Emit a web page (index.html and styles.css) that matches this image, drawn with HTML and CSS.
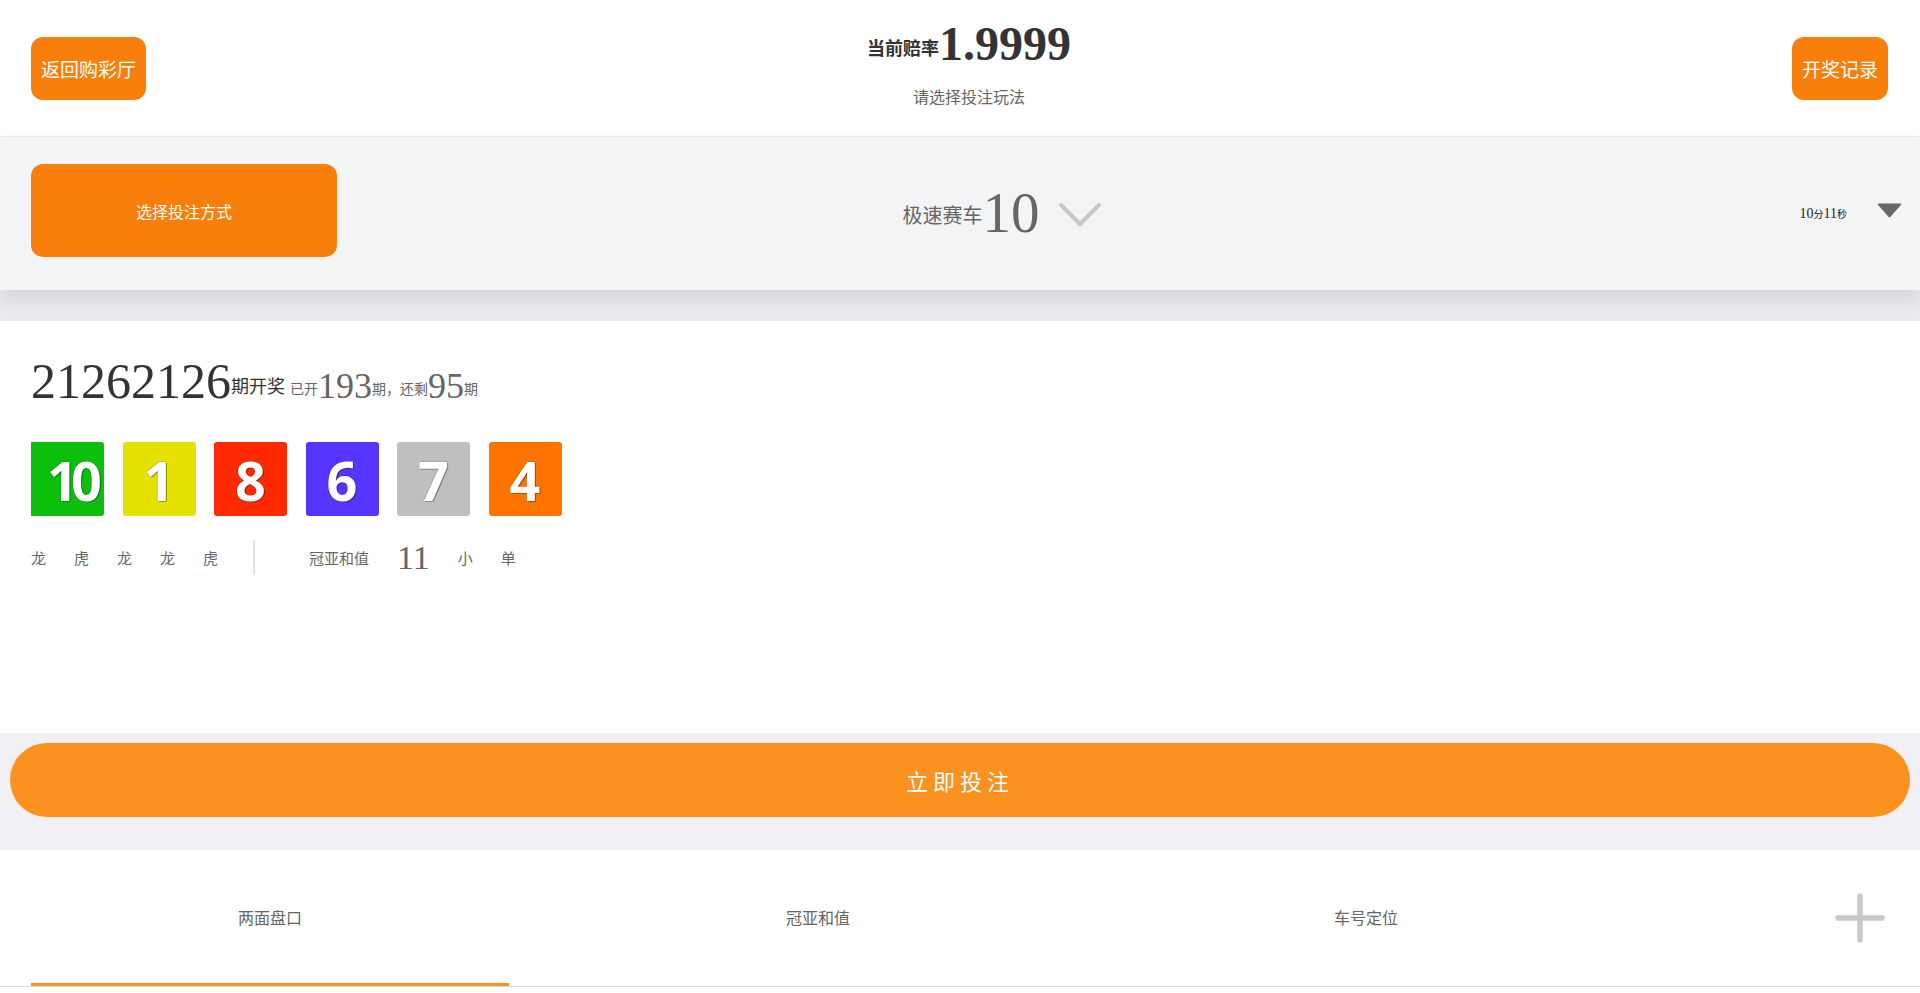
FILE: index.html
```html
<!DOCTYPE html>
<html lang="zh-CN">
<head>
<meta charset="utf-8">
<title>极速赛车10</title>
<link rel="stylesheet" href="styles.css">
</head>
<body>
<div class="page">
  <header class="topbar">
    <button class="btn-sm">返回购彩厅</button>
    <div class="title-wrap">
      <div class="title"><span class="cn">当前赔率</span>1.9999</div>
      <div class="subtitle">请选择投注玩法</div>
    </div>
    <button class="btn-sm">开奖记录</button>
  </header>

  <section class="selector">
    <button class="btn-mode">选择投注方式</button>
    <div class="game">
      <span class="game-name"><span class="cn">极速赛车</span>10</span>
      <svg class="chev" width="44" height="26" viewBox="0 0 44 26"><path d="M3 3 L22 22 L41 3" fill="none" stroke="#c8c8c8" stroke-width="4" stroke-linecap="round" stroke-linejoin="round"/></svg>
    </div>
    <div class="timer">
      <span class="timer-text">10<span class="cn">分</span>11<span class="cn">秒</span></span>
      <svg class="tri" width="25" height="15" viewBox="0 0 25 15"><path d="M1.5 1.2 H23.5 L12.5 13.8 Z" fill="#666" stroke="#666" stroke-width="1.5" stroke-linejoin="round"/></svg>
    </div>
  </section>

  <section class="result">
    <div class="issue">21262126<span class="cn">期开奖</span><span class="meta"><span class="cn">已开</span>193<span class="cn">期，还剩</span>95<span class="cn">期</span></span></div>
    <div class="balls">
      <div class="ball c-green"><span class="tight">10</span></div>
      <div class="ball c-yellow"><span>1</span></div>
      <div class="ball c-red"><span>8</span></div>
      <div class="ball c-blue"><span>6</span></div>
      <div class="ball c-gray"><span>7</span></div>
      <div class="ball c-orange"><span>4</span></div>
    </div>
    <div class="stats">
      <span class="cn">龙</span>
      <span class="cn">虎</span>
      <span class="cn">龙</span>
      <span class="cn">龙</span>
      <span class="cn">虎</span>
      <i class="divider"></i>
      <span class="cn">冠亚和值</span>
      <span class="num">11</span>
      <span class="cn">小</span>
      <span class="cn">单</span>
    </div>
  </section>

  <div class="action">
    <button class="bet">立即投注</button>
  </div>

  <nav class="tabs">
    <div class="tab active">两面盘口</div>
    <div class="tab">冠亚和值</div>
    <div class="tab">车号定位</div>
    <svg class="plus" width="50" height="50" viewBox="0 0 50 50"><path d="M25 3 V47 M3 25 H47" stroke="#c8c8c8" stroke-width="5.5" stroke-linecap="round"/></svg>
  </nav>
</div>
</body>
</html>
```

FILE: styles.css
```css
* { box-sizing: border-box; }
html, body { margin: 0; padding: 0; background: #fff; }
body { font-family: "Liberation Serif", "Noto Sans CJK SC", serif; color: #333; }
button { border: 0; margin: 0; padding: 0; cursor: pointer; font: inherit; }

.cn { font-family: "Noto Sans CJK SC", sans-serif; font-weight: 400; line-height: 1; }

.page { width: 1920px; background: #ececf0; }

/* header */
.topbar {
  height: 137px;
  display: flex;
  align-items: center;
  justify-content: space-between;
  padding: 0 32px 0 31px;
  background: #fff;
  border-bottom: 1px solid #ebebeb;
}
.btn-sm {
  height: 63px;
  padding: 0 10px;
  border-radius: 12px;
  background: #f97f0c;
  color: #fff;
  font-family: "Noto Sans CJK SC", sans-serif;
  font-size: 19px;
}
.title-wrap {
  align-self: flex-start;
  padding-top: 18px;
  display: flex;
  flex-direction: column;
  align-items: center;
}
.title {
  height: 52px;
  font-size: 48px;
  font-weight: 700;
  line-height: 52px;
  color: #333;
}
.title .cn { font-size: 18px; font-weight: 700; vertical-align: 0.3em; }
.subtitle {
  font-family: "Noto Sans CJK SC", sans-serif;
  font-size: 16px;
  line-height: 52px;
  color: #666;
}

/* selector bar */
.selector {
  position: relative;
  z-index: 1;
  height: 153px;
  display: flex;
  align-items: center;
  padding: 0 18px 6px 31px;
  background: #f3f4f6;
  box-shadow: 0 8px 20px rgba(0, 0, 0, 0.11);
}
.btn-mode {
  width: 306px;
  height: 93px;
  border-radius: 12px;
  background: #f97f0c;
  color: #fff;
  font-family: "Noto Sans CJK SC", sans-serif;
  font-size: 16px;
}
.game {
  flex: 1;
  display: flex;
  align-items: center;
  justify-content: center;
}
.game-name {
  height: 60px;
  font-size: 57px;
  line-height: 60px;
  color: #666;
  margin-top: 4px;
}
.game-name .cn { font-size: 20px; vertical-align: 0.45em; }
.chev { margin-left: 18px; margin-top: 8px; }
.timer {
  width: 235px;
  display: flex;
  align-items: center;
  justify-content: flex-end;
}
.timer-text { font-size: 14px; color: #222; margin-top: 6px; }
.timer-text .cn { font-size: 10px; }
.tri { margin-left: 30px; }

/* result area */
.result {
  margin-top: 31px;
  height: 412px;
  background: #fff;
  padding: 30px 31px 0;
}
.issue {
  height: 60px;
  font-size: 50px;
  line-height: 60px;
  color: #333;
  white-space: nowrap;
}
.issue > .cn { font-size: 18px; vertical-align: 0.3em; }
.meta { font-size: 36px; color: #666; margin-left: 5px; }
.meta .cn { font-size: 14px; vertical-align: 0.3em; }

.balls {
  margin-top: 31px;
  display: flex;
  gap: 18.5px;
}
.ball {
  width: 73px;
  height: 74px;
  border-radius: 3px;
  display: flex;
  align-items: center;
  justify-content: center;
  overflow: hidden;
}
.ball span {
  display: inline-block;
  font-family: "Open Sans", "Liberation Sans", sans-serif;
  font-weight: 700;
  font-size: 54px;
  line-height: 1;
  color: #fff;
  margin-top: 2px;
  text-shadow: 1px 1px 0 rgba(0, 0, 0, 0.3), -1px 0 0 rgba(0, 0, 0, 0.12), 0 -1px 0 rgba(0, 0, 0, 0.12), 1px 0 0 rgba(0, 0, 0, 0.15);
}
.ball .tight { letter-spacing: -7px; margin-right: -7px; }
.c-green { background: #0cbf0c; border-radius: 0 3px 3px 0; }
.c-yellow { background: #e6e100; }
.c-red { background: #ff2a00; }
.c-blue { background: #5535ff; }
.c-gray { background: #bfbfbf; }
.c-orange { background: #ff7400; }

.stats {
  margin-top: 24px;
  height: 35px;
  display: flex;
  align-items: center;
  gap: 28px;
  color: #666;
}
.stats .cn { font-size: 15px; }
.stats .num { font-size: 34px; line-height: 35px; }
.divider {
  width: 2px;
  height: 35px;
  background: #e2e2e2;
  margin: 0 26px 0 7px;
}

/* action band */
.action {
  background: #efeff4;
  padding: 10px 10px 33px;
}
.bet {
  width: 100%;
  height: 74px;
  border-radius: 37px;
  background: #fb911f;
  color: #fff;
  font-family: "Noto Sans CJK SC", sans-serif;
  font-size: 22px;
  letter-spacing: 5px;
}

/* tabs */
.tabs {
  height: 137px;
  display: flex;
  align-items: center;
  gap: 70px;
  padding: 0 35px 0 31px;
  background: #fff;
  border-bottom: 1px solid #dcdcdc;
}
.tab {
  width: 478px;
  height: 136px;
  display: flex;
  align-items: center;
  justify-content: center;
  font-family: "Noto Sans CJK SC", sans-serif;
  font-size: 16px;
  color: #666;
  border-bottom: 3px solid transparent;
}
.tab.active { border-bottom-color: #f7931e; }
.plus { margin-left: auto; }
```
